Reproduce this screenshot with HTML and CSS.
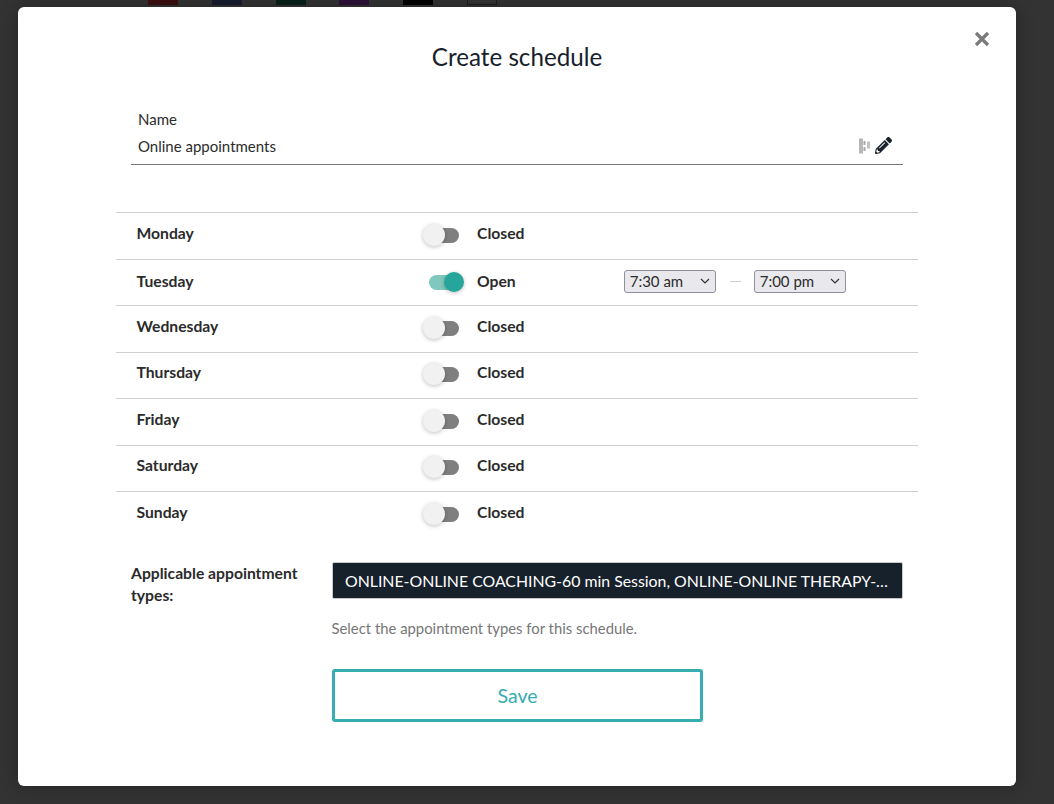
FILE: index.html
```html
<!DOCTYPE html>
<html lang="en">
<head>
<meta charset="utf-8">
<title>Create schedule</title>
<link rel="stylesheet" href="styles.css">
</head>
<body>
<div class="swatches">
  <span class="swatch s1"></span><span class="swatch s2"></span><span class="swatch s3"></span><span class="swatch s4"></span><span class="swatch s5"></span><span class="swatch s6"></span>
</div>
<main class="modal">
  <button class="close" aria-label="Close">
    <svg width="16" height="16" viewBox="0 0 16 16"><path d="M2 2 L14 14 M14 2 L2 14" stroke="#7a7a7a" stroke-width="3.2" fill="none"/></svg>
  </button>
  <h1 class="title">Create schedule</h1>
  <section class="name-field">
    <div class="name-label">Name</div>
    <div class="name-row">
      <span class="name-value">Online appointments</span>
      <span class="name-icons">
        <svg class="grip" width="12" height="16" viewBox="0 0 12 16"><path d="M0 0.500h4v15H0z" fill="#b9b7b5"/><path d="M4.500 3h2v4h-2zM4.500 9h2v4h-2z" fill="#a9a7a5"/><path d="M8 3.500h3v7H8z" fill="#c4c2c0"/></svg>
        <svg width="17" height="17" viewBox="0 0 512 512"><path fill="#17212b" d="M497.900 142.100l-46.100 46.100c-4.700 4.700-12.300 4.700-17 0l-111-111c-4.700-4.700-4.700-12.300 0-17l46.100-46.100c18.700-18.700 49.100-18.700 67.900 0l60.100 60.100c18.800 18.700 18.800 49.100 0 67.900zM284.200 99.800L21.600 362.400.4 483.900c-2.900 16.400 11.400 30.600 27.800 27.800l121.500-21.300 262.600-262.600c4.700-4.700 4.700-12.300 0-17l-111-111c-4.800-4.700-12.400-4.700-17.100 0zM124.100 339.900c-5.500-5.500-5.500-14.300 0-19.800l154-154c5.500-5.500 14.300-5.500 19.800 0s5.500 14.300 0 19.800l-154 154c-5.500 5.500-14.300 5.500-19.800 0zM88 424h48v36.300l-64.500 11.300-31.100-31.100L51.700 376H88v48z"/></svg>
      </span>
    </div>
  </section>
  <section class="days">
    <div class="day"><span class="day-name">Monday</span><span class="toggle"><span class="track"></span><span class="knob"></span></span><span class="state">Closed</span></div>
    <div class="day day-open"><span class="day-name">Tuesday</span><span class="toggle on"><span class="track"></span><span class="knob"></span></span><span class="state">Open</span>
      <span class="times">
        <select class="time"><option>7:30 am</option></select>
        <span class="dash"></span>
        <select class="time"><option>7:00 pm</option></select>
      </span>
    </div>
    <div class="day"><span class="day-name">Wednesday</span><span class="toggle"><span class="track"></span><span class="knob"></span></span><span class="state">Closed</span></div>
    <div class="day"><span class="day-name">Thursday</span><span class="toggle"><span class="track"></span><span class="knob"></span></span><span class="state">Closed</span></div>
    <div class="day"><span class="day-name">Friday</span><span class="toggle"><span class="track"></span><span class="knob"></span></span><span class="state">Closed</span></div>
    <div class="day"><span class="day-name">Saturday</span><span class="toggle"><span class="track"></span><span class="knob"></span></span><span class="state">Closed</span></div>
    <div class="day"><span class="day-name">Sunday</span><span class="toggle"><span class="track"></span><span class="knob"></span></span><span class="state">Closed</span></div>
  </section>
  <section class="types">
    <div class="types-label">Applicable appointment types:</div>
    <div class="types-body">
      <div class="types-box">ONLINE-ONLINE COACHING-60 min Session, ONLINE-ONLINE THERAPY-60 min Session</div>
      <p class="hint">Select the appointment types for this schedule.</p>
      <button class="save">Save</button>
    </div>
  </section>
</main>
</body>
</html>
```
FILE: styles.css
```css
* { box-sizing: border-box; }
html, body { height: 100%; }
body {
  margin: 0;
  overflow: hidden;
  background: #333333;
  font-family: Lato, "Liberation Sans", sans-serif;
  color: #2b2b2b;
}
.swatches { display: flex; gap: 33.800px; height: 5px; padding-left: 148px; }
.swatch { width: 30px; height: 5px; }
.s1 { background: #3c0f10; }
.s2 { background: #171c30; }
.s3 { background: #07211a; }
.s4 { background: #2e1238; }
.s5 { background: #000; }
.s6 { background: #333; border: 1px solid #1d1d1d; border-top: 0; }
.modal {
  position: relative;
  width: 998px;
  height: 779px;
  margin: 2px 0 0 18px;
  padding: 0 98px;
  background: #fff;
  border-radius: 6px;
  box-shadow: 0 0 18px rgba(0,0,0,.3);
}
.close {
  position: absolute;
  top: 24px;
  right: 26px;
  width: 16px;
  height: 16px;
  padding: 0;
  border: 0;
  background: none;
  display: block;
}
.close svg { display: block; }
.title {
  margin: 0;
  padding-top: 34px;
  height: 87px;
  text-align: center;
  font-size: 24.200px;
  line-height: 32px;
  font-weight: 400;
  color: #17212b;
}
.name-field {
  margin: 15px 15px 0;
  height: 56px;
  border-bottom: 1px solid #777;
  padding: 0 8px 0 7px;
  font-size: 15px;
  color: #2b2b2b;
}
.name-label { line-height: 20px; }
.name-row { display: flex; justify-content: space-between; align-items: center; height: 28px; margin-top: 3px; margin-right: 3px; }
.name-icons { display: flex; align-items: center; gap: 4px; margin-top: -2px; }
.name-icons svg { display: block; }
.name-icons .grip { margin-top: 2px; }
.days { margin-top: 47px; }
.day {
  display: flex;
  align-items: center;
  height: 46.500px;
  border-top: 1px solid #cfcfcf;
  padding-left: 20.500px;
  padding-bottom: 6px;
  font-size: 15.700px;
  font-weight: 700;
  color: #2b2b2b;
}
.day-open { padding-bottom: 2px; }
.day-name { width: 285px; }
.toggle { position: relative; display: block; width: 38px; height: 24px; margin: 4px 17px 0 1.500px; }
.day-open .toggle { margin-top: 2px; }
.track { position: absolute; left: 9px; top: 5px; width: 27px; height: 15px; border-radius: 8px; background: #7f7f7f; }
.knob { position: absolute; left: 0; top: 1px; width: 22px; height: 22px; border-radius: 50%; background: #f1f1f1; box-shadow: 0 1px 4px rgba(0,0,0,.25); }
.toggle.on .track { left: 6px; top: 5px; width: 31px; background: #80c8bd; }
.toggle.on .knob { left: 21px; top: 2px; width: 20px; height: 20px; background: #26a69a; }
.state { margin-left: -1px; }
.times { display: flex; align-items: center; margin-left: 108px; }
.time {
  appearance: none;
  width: 92px;
  height: 23px;
  padding: 0 0 0 5px;
  border: 1px solid #8f8f9d;
  border-radius: 3px;
  background-color: #e9e9ed;
  background-image: url("data:image/svg+xml,%3Csvg xmlns='http://www.w3.org/2000/svg' width='10' height='6' viewBox='0 0 10 6'%3E%3Cpath d='M1 1l4 4 4-4' fill='none' stroke='%23333' stroke-width='1.200'/%3E%3C/svg%3E");
  background-repeat: no-repeat;
  background-position: right 5px center;
  font-family: Lato, "Liberation Sans", sans-serif;
  font-size: 15px;
  color: #2b2b2b;
}
.dash { width: 11px; height: 1px; margin: 0 13px 0 14px; background: #cfcfcf; }
.types { display: flex; margin-top: 24px; padding-left: 15px; }
.types-label { width: 201px; font-size: 15.700px; line-height: 22px; font-weight: 700; color: #2b2b2b; }
.types-body { width: 571px; }
.types-box {
  height: 37px;
  padding: 0 12px;
  background: #17212b;
  border: 1px solid #c9c9c9;
  border-radius: 2px;
  color: #fff;
  font-size: 15.850px;
  line-height: 35px;
  white-space: nowrap;
  overflow: hidden;
  text-overflow: ellipsis;
}
.hint { margin: 19px 0 0 -0.500px; font-size: 14.850px; line-height: 20px; color: #777; }
.save {
  display: block;
  width: 371px;
  height: 53px;
  margin-top: 31px;
  background: #fff;
  border: 3px solid #36adb1;
  border-radius: 3px;
  color: #36adb1;
  font-family: Lato, "Liberation Sans", sans-serif;
  font-size: 19.500px;
}
```
